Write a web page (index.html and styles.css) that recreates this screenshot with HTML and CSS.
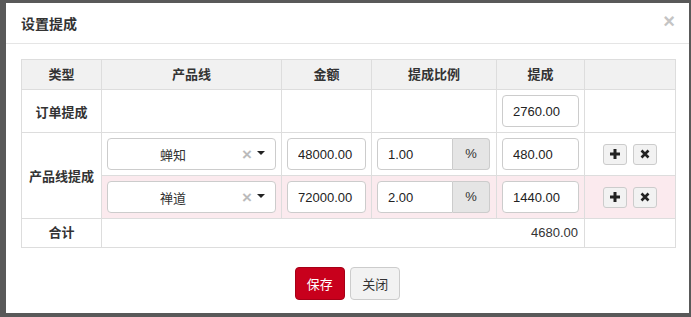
FILE: index.html
```html
<!DOCTYPE html>
<html lang="zh-CN">
<head>
  <meta charset="UTF-8" />
  <title>设置提成</title>
  <link rel="stylesheet" href="styles.css">
</head>
<body>
  <div class="modal">
    <div class="modal-header">
      <h4>设置提成</h4>
      <span class="close">&times;</span>
    </div>

    <div class="modal-body">
      <table class="commission-table">
        <colgroup>
          <col style="width: 80px">
          <col style="width: 180px">
          <col style="width: 90px">
          <col style="width: 125px">
          <col style="width: 88px">
          <col style="width: 91px">
        </colgroup>
        <thead>
          <tr>
            <th>类型</th>
            <th>产品线</th>
            <th>金额</th>
            <th>提成比例</th>
            <th>提成</th>
            <th></th>
          </tr>
        </thead>
        <tbody>
          <tr>
            <th>订单提成</th>
            <td></td>
            <td></td>
            <td></td>
            <td><input class="form-control" value="2760.00"></td>
            <td></td>
          </tr>
          <tr>
            <th rowspan="2">产品线提成</th>
            <td>
              <div class="picker">
                <span class="picker-text">蝉知</span>
                <span class="picker-clear">&times;</span>
                <span class="picker-caret"></span>
              </div>
            </td>
            <td><input class="form-control" value="48000.00"></td>
            <td>
              <div class="input-group">
                <input class="form-control" value="1.00">
                <span class="addon">%</span>
              </div>
            </td>
            <td><input class="form-control" value="480.00"></td>
            <td class="actions">
              <button class="icon-btn"><svg width="10" height="10" viewBox="0 0 10 10"><path d="M5 0v10M0 5h10" stroke="#222" stroke-width="3"/></svg></button>
              <button class="icon-btn"><svg width="10" height="10" viewBox="0 0 10 10"><path d="M1.5 1.5l7 7M8.5 1.5l-7 7" stroke="#222" stroke-width="2.6"/></svg></button>
            </td>
          </tr>
          <tr class="active-row">
            <td>
              <div class="picker">
                <span class="picker-text">禅道</span>
                <span class="picker-clear">&times;</span>
                <span class="picker-caret"></span>
              </div>
            </td>
            <td><input class="form-control" value="72000.00"></td>
            <td>
              <div class="input-group">
                <input class="form-control" value="2.00">
                <span class="addon">%</span>
              </div>
            </td>
            <td><input class="form-control" value="1440.00"></td>
            <td class="actions">
              <button class="icon-btn"><svg width="10" height="10" viewBox="0 0 10 10"><path d="M5 0v10M0 5h10" stroke="#222" stroke-width="3"/></svg></button>
              <button class="icon-btn"><svg width="10" height="10" viewBox="0 0 10 10"><path d="M1.5 1.5l7 7M8.5 1.5l-7 7" stroke="#222" stroke-width="2.6"/></svg></button>
            </td>
          </tr>
          <tr class="total-row">
            <th>合计</th>
            <td colspan="4" class="total">4680.00</td>
            <td></td>
          </tr>
        </tbody>
      </table>

      <div class="modal-footer">
        <button class="btn btn-primary">保存</button>
        <button class="btn">关闭</button>
      </div>
    </div>
  </div>
</body>
</html>
```

FILE: styles.css
```css
body {
  margin: 0;
  padding: 3px 2px 4px 6px;
  background-color: #595959;
  font-family: 'Liberation Sans', 'Noto Sans CJK SC', sans-serif;
  font-size: 13px;
  color: #333;
}

.modal {
  background-color: #fff;
  height: 310px;
}

.modal-header {
  height: 40px;
  border-bottom: 1px solid #e5e5e5;
  padding: 0 15px;
  display: flex;
  align-items: center;
  justify-content: space-between;
}

.modal-header h4 {
  margin: 0;
  font-size: 14px;
  font-weight: bold;
}

.close {
  font-size: 20px;
  font-weight: bold;
  color: #c4c4c4;
  line-height: 1;
  margin-right: -1px;
  margin-top: -4px;
}

.modal-body {
  padding: 15px;
}

.commission-table {
  width: 654px;
  border-collapse: collapse;
  table-layout: fixed;
}

.commission-table th,
.commission-table td {
  border: 1px solid #ddd;
  padding: 5px;
  vertical-align: middle;
}

.commission-table th {
  font-weight: bold;
  text-align: center;
}

.commission-table thead th {
  background-color: #f1f1f1;
  padding: 0;
  line-height: 29px;
}

.active-row td {
  background-color: #fbeaee;
}

.total-row th,
.total-row td {
  padding: 0 6px;
  line-height: 28px;
}

.total {
  text-align: right;
}

.form-control {
  display: block;
  box-sizing: border-box;
  width: 100%;
  height: 32px;
  padding: 0 10px;
  border: 1px solid #ccc;
  border-radius: 4px;
  font-family: inherit;
  font-size: 13px;
  color: #222;
  background-color: #fff;
}

.picker {
  display: flex;
  align-items: center;
  box-sizing: border-box;
  height: 32px;
  border: 1px solid #ccc;
  border-radius: 4px;
  background-color: #fff;
  padding-right: 10px;
}

.picker-text {
  flex: 1;
  text-align: center;
}

.picker-clear {
  width: 10px;
  margin: 0 5px 0 4px;
  color: #bbb;
  font-size: 17px;
  font-weight: bold;
  line-height: 1;
  text-align: center;
}

.picker-caret {
  width: 0;
  height: 0;
  border-left: 4px solid transparent;
  border-right: 4px solid transparent;
  border-top: 4px solid #222;
  margin-top: -2px;
}

.input-group {
  display: flex;
  width: 113px;
}

.input-group .form-control {
  flex: 1;
  border-radius: 4px 0 0 4px;
}

.addon {
  width: 37px;
  box-sizing: border-box;
  height: 32px;
  line-height: 30px;
  text-align: center;
  background-color: #e5e5e5;
  border: 1px solid #ccc;
  border-left: none;
  border-radius: 0 4px 4px 0;
}

.actions {
  text-align: center;
}

.icon-btn {
  width: 24px;
  height: 21px;
  padding: 0;
  margin: 0 1px;
  border: 1px solid #ccc;
  border-radius: 3px;
  background-color: #f2f2f2;
  vertical-align: middle;
}

.icon-btn svg {
  display: block;
  margin: 0 auto;
}

.modal-footer {
  margin-top: 19px;
  text-align: center;
}

.btn {
  height: 33px;
  padding: 0 11px;
  margin: 0 1px;
  font-family: inherit;
  font-size: 13px;
  color: #333;
  background-color: #f2f2f2;
  border: 1px solid #ccc;
  border-radius: 4px;
}

.btn-primary {
  color: #fff;
  background-color: #c8001c;
  border-color: #a60017;
}
```
